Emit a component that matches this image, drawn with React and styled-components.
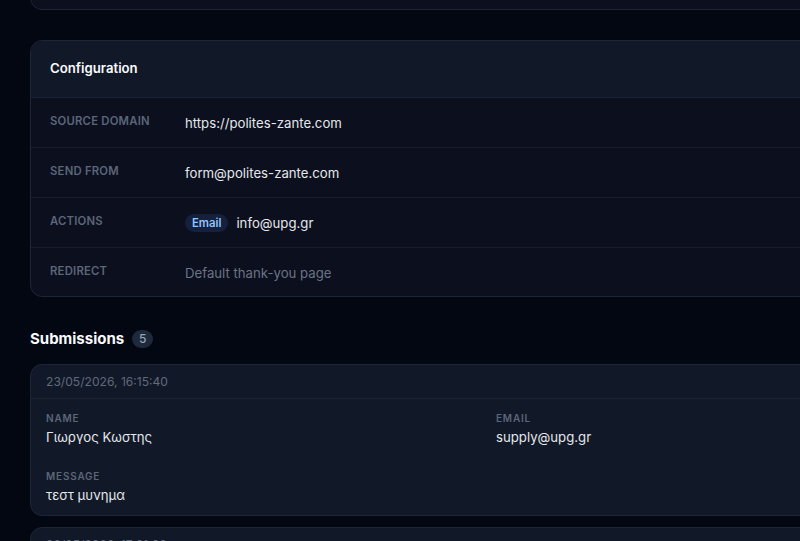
import React from 'react'
import styled, { createGlobalStyle } from 'styled-components'

const config = [
    { label: 'Source domain', value: 'https://polites-zante.com' },
    { label: 'Send from', value: 'form@polites-zante.com' },
    { label: 'Actions', value: 'info@upg.gr', tag: 'Email' },
    { label: 'Redirect', value: 'Default thank-you page', muted: true },
]

const submissions = [
    {
        date: '23/05/2026, 16:15:40',
        fields: [
            { label: 'Name', value: 'Γιωργος Κωστης' },
            { label: 'Email', value: 'supply@upg.gr' },
            { label: 'Message', value: 'τεστ μυνημα' },
        ],
    },
    {
        date: '22/05/2026, 17:01:08',
        fields: [
            { label: 'Name', value: 'Μαρια Παππα' },
            { label: 'Email', value: 'maria@upg.gr' },
        ],
    },
]

const App = () => {
    return (
        <>
            <GlobalStyle />
            <Page>
                <Card>
                    <CardHeader>
                        <CardTitle>Overview</CardTitle>
                    </CardHeader>
                    <Filler />
                </Card>

                <Card>
                    <CardHeader>
                        <CardTitle>Configuration</CardTitle>
                    </CardHeader>
                    {config.map((row) => (
                        <ConfigRow key={row.label}>
                            <RowLabel>{row.label}</RowLabel>
                            <RowValue $muted={row.muted}>
                                {row.tag && <Tag>{row.tag}</Tag>}
                                {row.value}
                            </RowValue>
                        </ConfigRow>
                    ))}
                </Card>

                <SectionHeading>
                    Submissions
                    <Count>5</Count>
                </SectionHeading>

                <List>
                    {submissions.map((s) => (
                        <Submission key={s.date}>
                            <SubmissionHeader>{s.date}</SubmissionHeader>
                            <Fields>
                                {s.fields.map((f) => (
                                    <Field key={f.label}>
                                        <FieldLabel>{f.label}</FieldLabel>
                                        <FieldValue>{f.value}</FieldValue>
                                    </Field>
                                ))}
                            </Fields>
                        </Submission>
                    ))}
                </List>
            </Page>
        </>
    )
}

const GlobalStyle = createGlobalStyle`
    html, body {
        margin: 0;
        background: #030712;
        overflow: hidden;
    }

    body {
        font-family: Inter, "Noto Sans", sans-serif;
        color: #e5e7eb;
        -webkit-font-smoothing: antialiased;
    }
`

const Page = styled.main`
    width: 916px;
    padding: 0 30px;
    margin-top: -111px;
    display: flex;
    flex-direction: column;
`

const Card = styled.section`
    background: #0b0f1e;
    border: 1px solid #1e2536;
    border-radius: 12px;
    overflow: hidden;
    margin-bottom: 30px;
`

const CardHeader = styled.header`
    height: 56px;
    padding: 0 19px;
    display: flex;
    align-items: center;
    background: #111827;
    border-bottom: 1px solid #1c2333;
`

const CardTitle = styled.h2`
    margin: 0;
    margin-top: -2px;
    font-size: 13.2px;
    font-weight: 600;
    color: #f9fafb;
`

const Filler = styled.div`
    height: 62px;
`

const ConfigRow = styled.div`
    height: 50px;
    box-sizing: border-box;
    padding: 15px 19px 0;
    display: flex;
    align-items: flex-start;
    border-bottom: 1px solid #171d2c;

    &:last-child {
        border-bottom: none;
        height: 48px;
    }
`

const RowLabel = styled.div`
    width: 135px;
    flex-shrink: 0;
    font-size: 11.3px;
    line-height: 16px;
    font-weight: 600;
    text-transform: uppercase;
    letter-spacing: 0.02em;
    color: #5b6679;
`

const RowValue = styled.div`
    display: flex;
    align-items: center;
    gap: 8px;
    font-size: 13.2px;
    line-height: 20px;
    color: ${({ $muted }) => ($muted ? '#6b7485' : '#e5e7eb')};
`

const Tag = styled.span`
    padding: 1px 7px;
    font-size: 11.3px;
    line-height: 16px;
    font-weight: 600;
    border-radius: 999px;
    background: #15203f;
    color: #93c5fd;
`

const SectionHeading = styled.h2`
    margin: 2px 0 15px;
    display: flex;
    align-items: center;
    gap: 8px;
    font-size: 15px;
    line-height: 20px;
    font-weight: 700;
    color: #f9fafb;
`

const Count = styled.span`
    min-width: 21px;
    height: 18px;
    box-sizing: border-box;
    display: inline-flex;
    align-items: center;
    justify-content: center;
    font-size: 12px;
    font-weight: 500;
    border-radius: 999px;
    background: #1e293b;
    color: #94a3b8;
`

const List = styled.div`
    display: flex;
    flex-direction: column;
    gap: 11px;
`

const Submission = styled.article`
    background: #111827;
    border: 1px solid #1e2536;
    border-radius: 12px;
    overflow: hidden;
`

const SubmissionHeader = styled.header`
    height: 33px;
    padding: 0 15px;
    display: flex;
    align-items: center;
    font-size: 12.1px;
    color: #5f6a7d;
    border-bottom: 1px solid #1c2333;
`

const Fields = styled.div`
    padding: 12px 15px 10px;
    display: grid;
    grid-template-columns: 1fr 1fr;
    column-gap: 16px;
    row-gap: 22px;
`

const Field = styled.div`
    display: flex;
    flex-direction: column;
    gap: 2px;
`

const FieldLabel = styled.span`
    font-size: 10px;
    line-height: 14px;
    font-weight: 600;
    text-transform: uppercase;
    letter-spacing: 0.08em;
    color: #5b6679;
`

const FieldValue = styled.span`
    font-size: 13.2px;
    line-height: 20px;
    color: #e5e7eb;
`

export default App
